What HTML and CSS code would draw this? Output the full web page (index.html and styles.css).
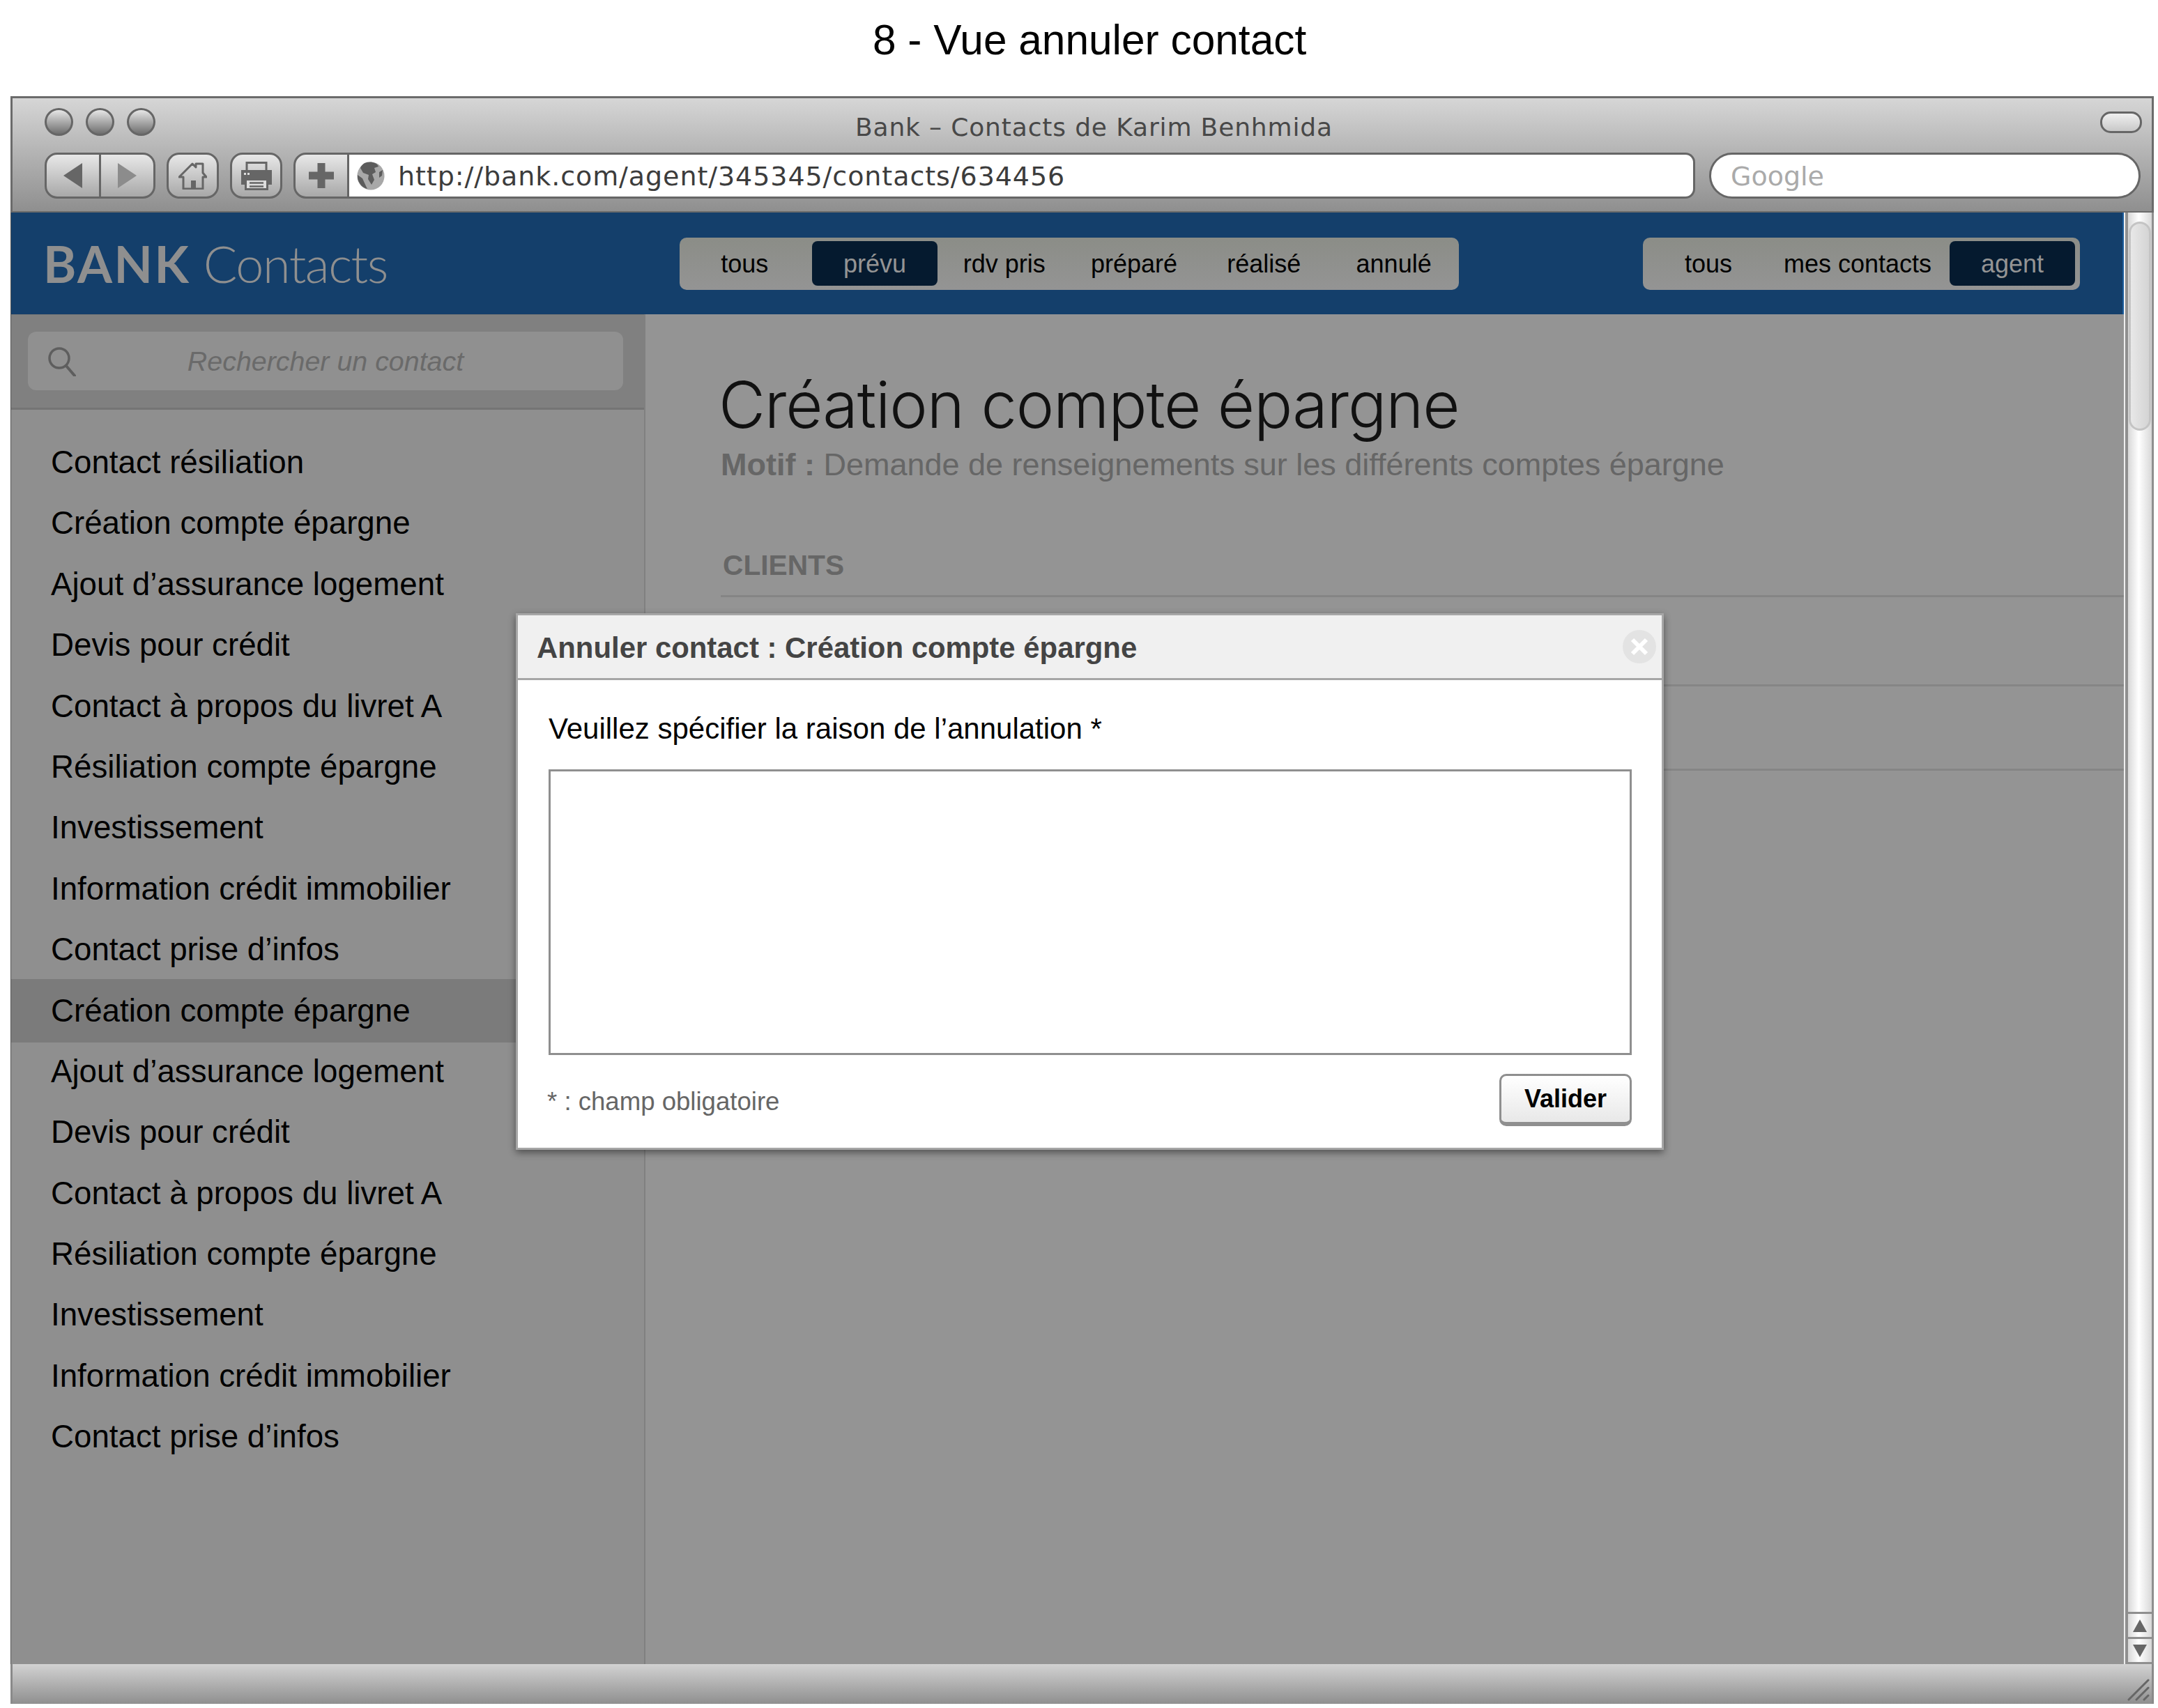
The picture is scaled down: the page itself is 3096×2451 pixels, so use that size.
FILE: index.html
```html
<!DOCTYPE html>
<html lang="fr">
<head>
    <meta charset="UTF-8">
    <title>8 - Vue annuler contact</title>
    <link rel="stylesheet" href="styles.css">
</head>
<body>
    <h1 class="sheet-title">8 - Vue annuler contact</h1>

    <div class="window">
        <div class="toolbar">
            <div class="toolbar-top">
                <div class="lights"><span></span><span></span><span></span></div>
                <div class="window-title">Bank – Contacts de Karim Benhmida</div>
                <div class="pill"></div>
            </div>
            <div class="toolbar-row">
                <div class="btn-group">
                    <button class="tool-btn back">
                        <svg width="27" height="36" viewBox="0 0 27 36"><path d="M27 0V36L0 18Z" fill="#666"/></svg>
                    </button>
                    <button class="tool-btn forward">
                        <svg width="27" height="36" viewBox="0 0 27 36"><path d="M0 0V36L27 18Z" fill="#8c8c8c"/></svg>
                    </button>
                </div>
                <button class="tool-btn single">
                    <svg width="41" height="39" viewBox="0 0 41 39"><path d="M1 21 20 2 25 7V2H35V15L40 21H35V38H7V21Z" fill="none" stroke="#666" stroke-width="3" stroke-linejoin="round"/><rect x="18" y="26" width="7" height="12" fill="#666"/></svg>
                </button>
                <button class="tool-btn single">
                    <svg width="44" height="41" viewBox="0 0 44 41"><rect x="8" y="1.5" width="28" height="13" fill="none" stroke="#666" stroke-width="3"/><rect x="0" y="12" width="44" height="21" fill="#666"/><rect x="6.5" y="25.5" width="31" height="14" fill="#ddd" stroke="#666" stroke-width="3"/><path d="M12 30.5H32M12 35.5H32" stroke="#666" stroke-width="2.5"/><rect x="4" y="16" width="3" height="3" fill="#ddd"/><rect x="9" y="16" width="3" height="3" fill="#ddd"/></svg>
                </button>
                <div class="address">
                    <button class="tool-btn add">
                        <svg width="36" height="36" viewBox="0 0 36 36"><path d="M12.5 0H23.5V12.5H36V23.5H23.5V36H12.5V23.5H0V12.5H12.5Z" fill="#666"/></svg>
                    </button>
                    <div class="url-field">
                        <svg class="globe" width="40" height="41" viewBox="0 0 40 41"><ellipse cx="20" cy="20.5" rx="19.5" ry="20" fill="#a8a8a8"/><path d="M11 2C19-1 29 1 31 7L25 9 27 15 22 18 25 26 21 33 16 25 17 19 9 16 5 9C6 6 8 4 11 2ZM1 19 8 24 13 35 15 39C8 38 2 30 1 24Z" fill="#5c5c5c"/><path d="M32 15 37 12 36 20 32 23Z" fill="#5c5c5c"/></svg>
                        <span class="url">http://bank.com/agent/345345/contacts/634456</span>
                    </div>
                </div>
                <div class="search-field">Google</div>
            </div>
        </div>

        <div class="body">
            <div class="page">
                <header class="appbar">
                    <div class="logo"><b>BANK</b> <span>Contacts</span></div>
                    <nav class="tabs status-tabs">
                        <a>tous</a>
                        <a class="active">prévu</a>
                        <a>rdv pris</a>
                        <a>préparé</a>
                        <a>réalisé</a>
                        <a>annulé</a>
                    </nav>
                    <nav class="tabs owner-tabs">
                        <a>tous</a>
                        <a>mes contacts</a>
                        <a class="active">agent</a>
                    </nav>
                </header>

                <div class="columns">
                    <aside class="sidebar">
                        <div class="search-band">
                            <div class="search-box">
                                <svg class="search-icon" width="40" height="42" viewBox="0 0 40 42"><circle cx="16" cy="16" r="14" fill="none" stroke="#5e5e5e" stroke-width="3.5"/><path d="M26 27 38 41" stroke="#5e5e5e" stroke-width="4" stroke-linecap="round"/></svg>
                                <span>Rechercher un contact</span>
                            </div>
                        </div>
                        <ul class="contact-list">
                            <li>Contact résiliation</li>
                            <li>Création compte épargne</li>
                            <li>Ajout d’assurance logement</li>
                            <li>Devis pour crédit</li>
                            <li>Contact à propos du livret A</li>
                            <li>Résiliation compte épargne</li>
                            <li>Investissement</li>
                            <li>Information crédit immobilier</li>
                            <li>Contact prise d’infos</li>
                            <li class="selected">Création compte épargne</li>
                            <li>Ajout d’assurance logement</li>
                            <li>Devis pour crédit</li>
                            <li>Contact à propos du livret A</li>
                            <li>Résiliation compte épargne</li>
                            <li>Investissement</li>
                            <li>Information crédit immobilier</li>
                            <li>Contact prise d’infos</li>
                        </ul>
                    </aside>

                    <main class="detail">
                        <h2>Création compte épargne</h2>
                        <p class="motif"><b>Motif :</b> Demande de renseignements sur les différents comptes épargne</p>
                        <h3>CLIENTS</h3>
                        <div class="rule rule-one"></div>
                        <div class="rule rule-two"></div>
                        <div class="rule rule-three"></div>
                    </main>
                </div>
            </div>

            <div class="scrollbar">
                <div class="track"><div class="thumb"></div></div>
                <div class="arrow"><svg width="20" height="18" viewBox="0 0 20 18"><path d="M10 0 20 18H0Z" fill="#666"/></svg></div>
                <div class="arrow"><svg width="20" height="18" viewBox="0 0 20 18"><path d="M0 0H20L10 18Z" fill="#666"/></svg></div>
            </div>
        </div>

        <div class="statusbar">
            <svg width="32" height="32" viewBox="0 0 32 32"><path d="M2 30 30 2M13 30 30 13M24 30 30 24" stroke="#666" stroke-width="3" stroke-linecap="round"/></svg>
        </div>
    </div>

    <div class="dialog">
        <div class="dialog-head">
            <span>Annuler contact : Création compte épargne</span>
            <span class="close">
                <svg width="26" height="26" viewBox="0 0 26 26"><path d="M3 3 23 23M23 3 3 23" stroke="#fff" stroke-width="6"/></svg>
            </span>
        </div>
        <div class="dialog-body">
            <label for="reason">Veuillez spécifier la raison de l’annulation *</label>
            <textarea id="reason"></textarea>
            <div class="dialog-foot">
                <span class="required">* : champ obligatoire</span>
                <button class="validate">Valider</button>
            </div>
        </div>
    </div>
</body>
</html>
```

FILE: styles.css
```css
* {
    box-sizing: border-box;
}

body {
    margin: 0;
    background-color: #fff;
    font-family: "Liberation Sans", Arial, sans-serif;
    position: relative;
    width: 3096px;
    height: 2451px;
    overflow: hidden;
}

.sheet-title {
    margin: 0;
    height: 138px;
    padding: 20px 0 0 1252px;
    font-size: 60.4px;
    line-height: 74px;
    font-weight: 400;
    color: #000;
}

.window {
    margin-left: 15px;
    width: 3075px;
    height: 2307px;
    display: flex;
    flex-direction: column;
}

/* browser chrome */
.toolbar {
    height: 167px;
    border: 3px solid #6b6b6b;
    border-bottom-width: 2px;
    background: linear-gradient(#d6d6d6, #8f8f8f);
    padding-left: 46px;
}

.toolbar-top {
    height: 78px;
    display: grid;
    grid-template-columns: 1163px 1fr 60px;
    padding-right: 14px;
}

.lights {
    display: flex;
    gap: 18px;
    padding-top: 14px;
}

.lights span {
    width: 41px;
    height: 40px;
    border: 3px solid #666;
    border-radius: 50%;
    background: linear-gradient(#e6e6e6, #6e6e6e);
}

.window-title {
    padding-top: 20px;
    font-family: "DejaVu Sans", sans-serif;
    font-size: 36px;
    line-height: 44px;
    letter-spacing: 0.85px;
    color: #484848;
}

.pill {
    margin-top: 19px;
    height: 31px;
    border: 3px solid #666;
    border-radius: 15px;
    background: linear-gradient(#f0f0f0, #c8c8c8);
}

.toolbar-row {
    display: flex;
    height: 66px;
}

.tool-btn {
    display: flex;
    align-items: center;
    justify-content: center;
    padding: 0;
    height: 66px;
    border: 3px solid #666;
    border-radius: 18px;
    background: linear-gradient(#e8e8e8, #a8a8a8);
}

.btn-group {
    display: flex;
    width: 159px;
    margin-right: 16px;
}

.btn-group .back {
    flex: 1;
    border-radius: 18px 0 0 18px;
}

.btn-group .forward {
    flex: 1;
    border-left: 0;
    border-radius: 0 18px 18px 0;
}

.single {
    width: 75px;
    margin-right: 16px;
}

.address {
    display: flex;
    width: 2011px;
    margin-right: 20px;
}

.add {
    width: 80px;
    border-radius: 18px 0 0 18px;
}

.url-field {
    flex: 1;
    display: flex;
    align-items: center;
    padding-left: 11px;
    background: #fff;
    border: 3px solid #666;
    border-left: 0;
    border-radius: 0 14px 14px 0;
}

.url {
    margin-left: 19px;
    padding-top: 2px;
    font-family: "DejaVu Sans", sans-serif;
    font-size: 38px;
    letter-spacing: 0.93px;
    color: #3c3c3c;
}

.search-field {
    width: 619px;
    height: 66px;
    padding-left: 28px;
    border: 3px solid #666;
    border-radius: 33px;
    background: #fff;
    font-family: "DejaVu Sans", sans-serif;
    font-size: 38px;
    line-height: 62px;
    color: #aaa;
}

.body {
    display: flex;
    height: 2083px;
}

.page {
    width: 3032px;
    display: flex;
    flex-direction: column;
    border-left: 1px solid #555;
    background: #949494;
}

/* app header */
.appbar {
    height: 146px;
    display: flex;
    align-items: center;
    background: #143f6b;
    border-right: 2px solid #1d5e9e;
    padding-left: 46px;
}

.logo {
    width: 913px;
    color: #8f8f8f;
    font-family: Lato, sans-serif;
    font-size: 72px;
    line-height: 1;
    white-space: nowrap;
}

.logo b {
    font-weight: 700;
    letter-spacing: 2.5px;
}

.logo span {
    font-weight: 300;
    letter-spacing: -1.5px;
}

.tabs {
    display: grid;
    height: 75px;
    align-items: center;
    padding: 4px 0;
    border-radius: 10px;
    background: linear-gradient(#8b8d87, #949494);
    font-size: 36px;
    color: #000;
    text-align: center;
}

.status-tabs {
    width: 1118px;
    grid-template-columns: repeat(6, 186.3px);
}

.status-tabs .active {
    margin: 0 3px 0 4px;
}

.owner-tabs {
    width: 627px;
    margin-left: 264px;
    grid-template-columns: 188px 240px 192px;
}

.owner-tabs .active {
    margin-left: 12px;
}

.tabs a {
    display: block;
    height: 64px;
    line-height: 66px;
}

.tabs .active {
    border-radius: 8px;
    background: #051a2f;
    color: #949494;
}

/* left column */
.columns {
    flex: 1;
    display: flex;
}

.sidebar {
    width: 910px;
    background: #8f8f8f;
    border-right: 2px solid #808080;
}

.search-band {
    height: 137px;
    padding: 24px 30px 0 24px;
    background: #808080;
    border-top: 1px solid #777;
    border-bottom: 3px solid #747474;
}

.search-box {
    display: flex;
    align-items: center;
    justify-content: center;
    position: relative;
    height: 84px;
    border-radius: 12px;
    background: #909090;
    font-size: 39.4px;
    font-style: italic;
    color: #6a6a6a;
}

.search-icon {
    position: absolute;
    left: 29px;
    top: 22px;
}

.contact-list {
    list-style: none;
    margin: 0;
    padding: 32px 0 0;
}

.contact-list li {
    height: 87.4px;
    line-height: 87.4px;
    padding-left: 57px;
    font-size: 45.7px;
    color: #000;
}

.contact-list .selected {
    height: 91.4px;
    margin: -2px 0;
    background: #7b7b7b;
    line-height: 91.4px;
}

/* right column */
.detail {
    flex: 1;
    padding: 72px 0 0 108px;
}

.detail h2 {
    margin: 0 0 0 -3px;
    font-family: Inter, sans-serif;
    font-size: 92px;
    line-height: 116px;
    font-weight: 300;
    letter-spacing: -1.15px;
    color: #111;
}

.motif {
    margin: 0;
    font-size: 45px;
    line-height: 56px;
    color: #666;
}

.detail h3 {
    margin: 88px 0 0;
    padding-left: 3px;
    font-size: 40.7px;
    line-height: 56px;
    font-weight: 700;
    color: #666;
}

.rule {
    height: 3px;
    background: #858585;
}

.rule-one {
    margin-top: 15px;
}

.rule-two {
    margin-top: 125px;
}

.rule-three {
    margin-top: 118px;
}

/* scrollbar */
.scrollbar {
    width: 43px;
    display: flex;
    flex-direction: column;
    gap: 3px;
    padding: 0 0 3px 4px;
    background: #8f8f8f;
    border-left: 2px solid #eee;
    border-right: 3px solid #8f8f8f;
}

.track {
    flex: 1;
    padding: 13px 1px 0;
    background: linear-gradient(90deg, #d8d8d8, #fff 45%, #d8d8d8);
}

.thumb {
    height: 300px;
    border: 3px solid #c4c4c4;
    border-radius: 17px;
    background: linear-gradient(90deg, #e8e8e8, #d4d4d4);
}

.arrow {
    height: 33px;
    display: flex;
    align-items: center;
    justify-content: center;
    background: linear-gradient(90deg, #d8d8d8, #fff 45%, #d8d8d8);
}

.statusbar {
    flex: 1;
    display: flex;
    justify-content: flex-end;
    align-items: flex-end;
    padding: 0 3px 4px 0;
    border-left: 3px solid #8a8a8a;
    border-right: 3px solid #8a8a8a;
    background: linear-gradient(#d2d2d2, #8f8f8f);
}

/* modal */
.dialog {
    position: absolute;
    left: 740px;
    top: 880px;
    width: 1647px;
    height: 770px;
    border: 3px solid #a6a6a6;
    background: #fff;
    box-shadow: 0 4px 10px rgba(0, 0, 0, 0.45);
}

.dialog-head {
    height: 93px;
    display: flex;
    align-items: center;
    justify-content: space-between;
    padding: 4px 8px 0 27px;
    border-bottom: 3px solid #a6a6a6;
    background: #f0f0f0;
    font-size: 41.9px;
    font-weight: 700;
    color: #444;
}

.close {
    width: 48px;
    height: 48px;
    display: flex;
    align-items: center;
    justify-content: center;
    border-radius: 50%;
    background: #e3e3e3;
    margin-top: -4px;
}

.dialog-body {
    padding: 40px 44px 0;
}

.dialog-body label {
    display: block;
    font-size: 42px;
    line-height: 60px;
    color: #000;
}

.dialog-body textarea {
    display: block;
    width: 1554px;
    height: 410px;
    margin-top: 28px;
    padding: 0;
    border: 3px solid #8f8f8f;
    border-radius: 0;
    background: #fff;
    resize: none;
}

.dialog-foot {
    display: flex;
    align-items: flex-start;
    justify-content: space-between;
    margin-top: 27px;
    width: 1554px;
}

.required {
    margin-top: 20px;
    margin-left: -2px;
    font-size: 36.6px;
    line-height: 40px;
    color: #666;
}

.validate {
    width: 190px;
    height: 75px;
    padding: 0;
    border: 3px solid #8f8f8f;
    border-bottom-width: 6px;
    border-radius: 10px;
    background: linear-gradient(#fff, #e8e8e8);
    font-family: inherit;
    font-size: 36px;
    font-weight: 700;
    color: #000;
}
```
